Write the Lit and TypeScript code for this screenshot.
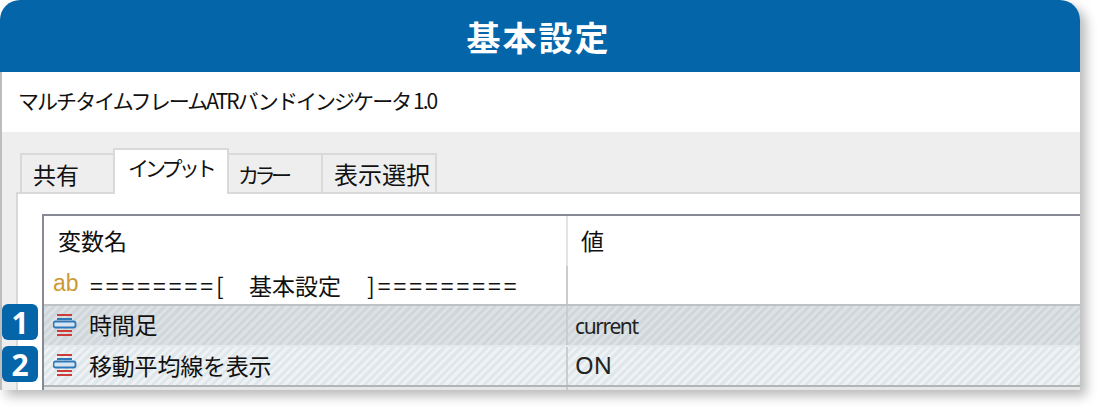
import { LitElement, html, css } from "lit";
import { customElement } from "lit/decorators.js";

const rowIcon = html`<svg class="ico" width="24" height="24" viewBox="0 0 24 24">
  <rect x="4" y="0" width="15" height="2" fill="#cc3d3a"/>
  <rect x="4" y="4" width="15" height="2" fill="#2f78b8"/>
  <rect x="0.5" y="7.5" width="22" height="6" rx="2" fill="#d5e5f2" stroke="#2f78b8" stroke-width="1.8"/>
  <rect x="4" y="16" width="15" height="2" fill="#cc3d3a"/>
  <rect x="4" y="20" width="15" height="2" fill="#cc3d3a"/>
</svg>`;

@customElement("app-root")
export class AppRoot extends LitElement {
  static styles = css`
    :host { display: block; width: 1100px; height: 410px; background: #fff; overflow: hidden;
      font-family: "Noto Sans CJK JP", "Noto Sans", sans-serif; color: #111; }
    .card { position: relative; width: 1080px; height: 390px; border-radius: 20px 20px 0 0; background: #fff;
      box-shadow: 6px 6px 12px rgba(0,0,0,.28); display: flex; flex-direction: column; overflow: hidden; }
    .head { height: 72px; flex: none; background: #0565a9; color: #fff; display: flex; align-items: center; justify-content: center;
      font-size: 34px; font-weight: 700; letter-spacing: 2px; padding-right: 3px; box-sizing: border-box; }
    .body { flex: 1; border-left: 2px solid #bdbdbd; display: flex; flex-direction: column; min-height: 0; }
    .name { height: 60px; flex: none; display: flex; align-items: center; padding-left: 16px; font-size: 21px; letter-spacing: -1.95px; padding-bottom: 4px; box-sizing: border-box; }
    .pane { flex: 1; background: #eee; padding: 16px 0 0 14px; display: flex; flex-direction: column; min-height: 0; }
    .tabs { display: flex; align-items: flex-end; height: 44px; flex: none; padding-left: 4px; position: relative; z-index: 1; }
    .tab { height: 39px; box-sizing: border-box; border: 2px solid #d9d9d9; border-bottom: none; border-right-width: 0; font-size: 23px; display: flex; align-items: center; }
    .tab:last-child { border-right-width: 2px; }
    .t1 { width: 93px; padding-left: 11px; }
    .t2 { width: 116px; background: #fff; border-right-width: 2px; margin-bottom: -2px; height: 46px; padding: 0 0 10px 13px; font-size: 21px; letter-spacing: -3.9px; }
    .t3 { width: 92px; border-left: none; font-size: 21px; letter-spacing: -4.5px; padding-left: 9px; }
    .t4 { width: 116px; padding-left: 11px; font-size: 24px; }
    .panel { flex: 1; background: #fff; border: 2px solid #d9d9d9; border-right: none; border-bottom: none; padding: 20px 0 0 24px; min-height: 0; }
    .table { height: 100%; border-left: 2px solid #878a94; border-top: 2px solid #878a94; display: flex; flex-direction: column; }
    .row { display: grid; grid-template-columns: 522px 1fr; flex: none; font-size: 23px; box-sizing: border-box; }
    .cell { display: flex; align-items: center; box-sizing: border-box; }
    .cell + .cell { border-left: 2px solid #ccc; padding-left: 7px; }
    .hr { height: 50px; }
    .hr .cell { padding-bottom: 2px; }
    .hr .cell:first-child { padding-left: 14px; }
    .hr .cell + .cell { padding-left: 13px; border-left-color: #e4e4e4; }
    .ab { height: 38px; }
    .ab .cell:first-child { padding: 0 0 0 9px; }
    .abi { color: #cc9a36; font-family: "Liberation Sans", sans-serif; font-size: 23px; width: 37px; flex: none; margin-top: -4px; }
    .eq { letter-spacing: 3px; font-size: 23px; }
    .kw { margin: 0 26px 0 22px; }
    .opt { height: 41px; border-top: 2px solid #bcc2c5; background: repeating-linear-gradient(135deg, #d0d7da 0 3px, #dbe1e4 3px 6px); }
    .opt2 { height: 40px; border-top-color: #e6e9eb; background: repeating-linear-gradient(135deg, #e0e7ea 0 3px, #eef2f4 3px 6px); }
    .opt .cell:first-child { padding-left: 9px; }
    .opt .cell + .cell { padding-left: 7px; }
    .ico { margin-right: 12px; flex: none; }
    .k { letter-spacing: -.2px; margin-top: -3px; }
    .v { font-family: "Noto Sans", sans-serif; color: #222; font-size: 21px; letter-spacing: -1.4px; }
    .on { font-size: 24px; letter-spacing: 0; padding-bottom: 3px; }
    .rest { flex: 1; border-top: 2px solid #b0b5b8; background: #e6e6e6; display: grid; grid-template-columns: 522px 1fr; }
    .rest div + div { border-left: 2px solid #ccc; }
    .badge { position: absolute; left: 2px; width: 36px; height: 36px; border-radius: 6px; background: #0565a9; color: #fff;
      font: 700 30px "Open Sans", "Liberation Sans", sans-serif; display: flex; align-items: center; justify-content: center; z-index: 2; }
    .b1 { top: 304px; }
    .b2 { top: 346px; }
  `;

  render() {
    return html`<div class="card">
      <div class="head">基本設定</div>
      <div class="body">
        <div class="name">マルチタイムフレームATRバンドインジケータ 1.0</div>
        <div class="pane">
          <div class="tabs">
            <div class="tab t1">共有</div>
            <div class="tab t2">インプット</div>
            <div class="tab t3">カラー</div>
            <div class="tab t4">表示選択</div>
          </div>
          <div class="panel">
            <div class="table">
              <div class="row hr"><div class="cell">変数名</div><div class="cell">値</div></div>
              <div class="row ab"><div class="cell"><span class="abi">ab</span><span class="eq">========[</span><span class="kw">基本設定</span><span class="eq">]=========</span></div><div class="cell"></div></div>
              <div class="row opt"><div class="cell">${rowIcon}<span class="k">時間足</span></div><div class="cell v">current</div></div>
              <div class="row opt opt2"><div class="cell">${rowIcon}<span class="k">移動平均線を表示</span></div><div class="cell v on">ON</div></div>
              <div class="rest"><div></div><div></div></div>
            </div>
          </div>
        </div>
      </div>
      <div class="badge b1">1</div>
      <div class="badge b2">2</div>
    </div>`;
  }
}
